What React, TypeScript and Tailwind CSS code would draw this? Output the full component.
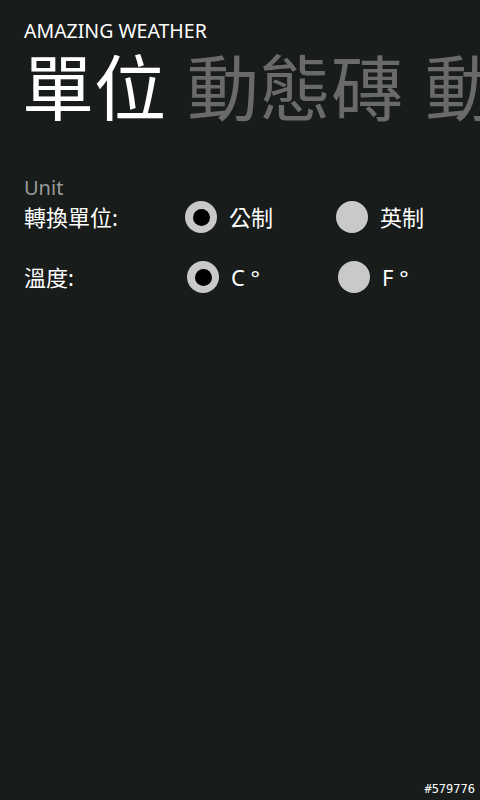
import React from "react";

const font = { fontFamily: '"Noto Sans", "Noto Sans CJK TC", sans-serif' };

function Radio({ checked }: { checked?: boolean }) {
  return (
    <span className="flex h-[32px] w-[32px] shrink-0 items-center justify-center rounded-full bg-[#c9c9c9]">
      {checked && <span className="h-[17px] w-[17px] rounded-full bg-black" />}
    </span>
  );
}

function Option({ checked, label }: { checked?: boolean; label: string }) {
  return (
    <div className="flex w-[151px] shrink-0 items-center gap-[12px]">
      <Radio checked={checked} />
      <span className="text-[22px] leading-none text-white">{label}</span>
    </div>
  );
}

export default function App() {
  return (
    <div
      className="relative h-[800px] w-[480px] overflow-hidden bg-[#181c1a] text-white"
      style={font}
    >
      <header className="pl-[24px] pt-[19px]">
        <div className="text-[19.5px] leading-[24px]">AMAZING WEATHER</div>
        <div className="-ml-[2px] mt-[6px] flex whitespace-nowrap text-[72px] leading-[76px]">
          <span className="shrink-0 text-white">單位</span>
          <span className="ml-[21px] shrink-0 text-[#6a6a6a]">動態磚</span>
          <span className="ml-[22px] shrink-0 text-[#6a6a6a]">動態磚</span>
        </div>
      </header>

      <section className="mt-[51px] pl-[24px]">
        <div className="text-[20px] leading-[24px] text-[#9b9b9b]">Unit</div>
        <div className="mt-[1px] flex h-[32px] items-center">
          <span className="w-[161px] shrink-0 text-[22px] leading-none">轉換單位:</span>
          <Option checked label="公制" />
          <Option label="英制" />
        </div>
        <div className="mt-[28px] flex h-[32px] items-center">
          <span className="w-[163px] shrink-0 text-[22px] leading-none">溫度:</span>
          <Option checked label="C °" />
          <Option label="F °" />
        </div>
      </section>

      <div
        className="absolute bottom-[2px] right-[5px] text-[12px] text-white"
        style={{ fontFamily: '"DejaVu Sans Mono", monospace' }}
      >
        #579776
      </div>
    </div>
  );
}
